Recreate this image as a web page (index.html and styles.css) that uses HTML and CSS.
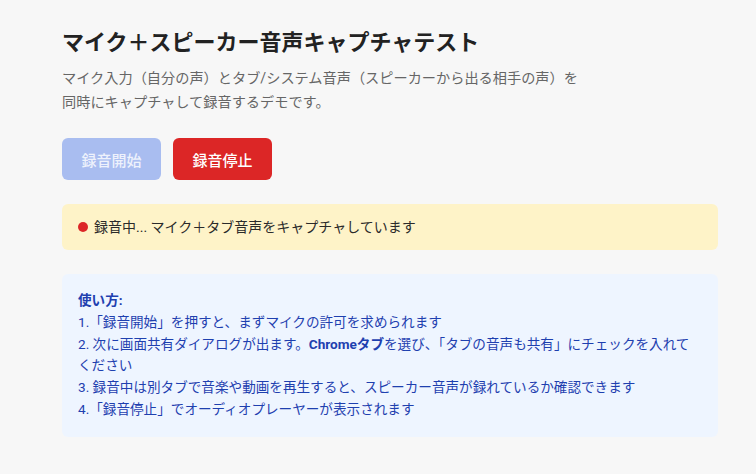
FILE: index.html
```html
<!DOCTYPE html>
<html lang="ja">
<head>
<meta charset="utf-8">
<title>マイク＋スピーカー音声キャプチャテスト</title>
<link rel="stylesheet" href="styles.css">
</head>
<body>
<main class="page">
  <h1 class="title">マイク＋スピーカー音声キャプチャテスト</h1>
  <p class="desc">マイク入力（自分の声）とタブ/システム音声（スピーカーから出る相手の声）を<br>同時にキャプチャして録音するデモです。</p>
  <div class="actions">
    <button class="btn btn-start" disabled>録音開始</button>
    <button class="btn btn-stop">録音停止</button>
  </div>
  <div class="status"><span class="dot"></span>録音中... マイク＋タブ音声をキャプチャしています</div>
  <div class="help">
    <div class="help-title">使い方:</div>
    <div>1.「録音開始」を押すと、まずマイクの許可を求められます</div>
    <div>2. 次に画面共有ダイアログが出ます。<strong>Chromeタブ</strong>を選び、「タブの音声も共有」にチェックを入れてください</div>
    <div>3. 録音中は別タブで音楽や動画を再生すると、スピーカー音声が録れているか確認できます</div>
    <div>4.「録音停止」でオーディオプレーヤーが表示されます</div>
  </div>
</main>
</body>
</html>
```

FILE: styles.css
```css
html, body {
  margin: 0;
  padding: 0;
  background: #f7f7f7;
}
body {
  font-family: Roboto, "Noto Sans CJK JP", sans-serif;
  color: #333;
}
.page {
  width: 656px;
  padding: 29px 0 0 62px;
  display: flex;
  flex-direction: column;
}
.title {
  margin: 0;
  font-size: 22px;
  line-height: 28px;
  font-weight: 700;
  color: #222;
}
.desc {
  margin: 9px 0 0;
  font-size: 14.2px;
  line-height: 24px;
  color: #666;
}
.actions {
  display: flex;
  gap: 12px;
  margin-top: 24px;
}
.btn {
  height: 42px;
  padding: 0 19.5px;
  border: none;
  border-radius: 6px;
  font-family: inherit;
  font-size: 15px;
  font-weight: 500;
  color: #fff;
}
.btn-start {
  background: #a9bdf0;
  color: #eef2fc;
}
.btn-stop {
  background: #dc2626;
}
.status {
  margin-top: 24px;
  background: #fef3c8;
  border-radius: 6px;
  padding: 12px 16px;
  font-size: 14px;
  line-height: 22px;
  color: #2a2a2a;
  display: flex;
  align-items: center;
}
.dot {
  width: 10px;
  height: 10px;
  border-radius: 50%;
  background: #dc2626;
  margin-right: 6px;
  flex: none;
}
.help {
  margin-top: 24px;
  background: #eef5ff;
  border-radius: 6px;
  padding: 16px;
  font-size: 13.6px;
  line-height: 1.6;
  color: #1e40af;
}
.help-title {
  font-weight: 700;
}
.help strong {
  font-weight: 700;
}
```
